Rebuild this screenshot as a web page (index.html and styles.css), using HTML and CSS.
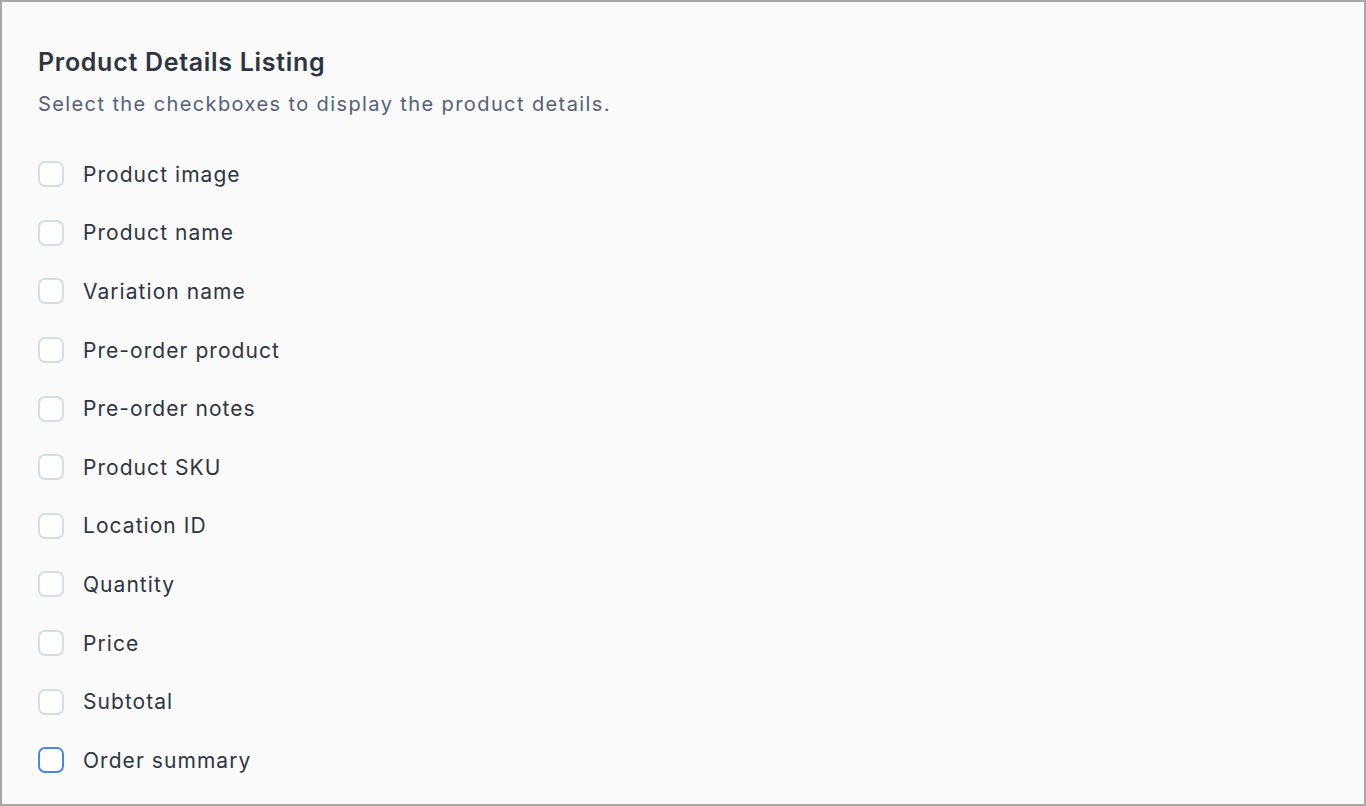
FILE: index.html
```html
<!DOCTYPE html>
<html>
<head>
  <title>Product Details Listing</title>
  <link rel="stylesheet" href="styles.css">
</head>
<body>
  <div class="panel">
    <h2 class="panel-title">Product Details Listing</h2>
    <p class="panel-desc">Select the checkboxes to display the product details.</p>

    <ul class="option-list">
      <li><label class="option"><span class="box"></span>Product image</label></li>
      <li><label class="option"><span class="box"></span>Product name</label></li>
      <li><label class="option"><span class="box"></span>Variation name</label></li>
      <li><label class="option"><span class="box"></span>Pre-order product</label></li>
      <li><label class="option"><span class="box"></span>Pre-order notes</label></li>
      <li><label class="option"><span class="box"></span>Product SKU</label></li>
      <li><label class="option"><span class="box"></span>Location ID</label></li>
      <li><label class="option"><span class="box"></span>Quantity</label></li>
      <li><label class="option"><span class="box"></span>Price</label></li>
      <li><label class="option"><span class="box"></span>Subtotal</label></li>
      <!-- focused item -->
      <li><label class="option"><span class="box focus"></span>Order summary</label></li>
    </ul>
  </div>
</body>
</html>
```

FILE: styles.css
```css
html, body {
  margin: 0;
  padding: 0;
  height: 100%;
}

body {
  font-family: Inter, "Noto Sans", sans-serif;
  background: #fafafa;
}

.panel {
  box-sizing: border-box;
  height: 806px;
  border: 2px solid #a8a8a8;
  background: #fafafa;
  padding: 44px 36px 0 36px;
}

.panel-title {
  margin: 0;
  font-size: 25px;
  font-weight: 600;
  line-height: 32px;
  letter-spacing: 0.7px;
  color: #2e3542;
}

.panel-desc {
  margin: 12px 0 0 0;
  font-size: 20px;
  line-height: 28px;
  letter-spacing: 1.4px;
  color: #52607b;
}

.option-list {
  list-style: none;
  margin: 27px 0 0 0;
  padding: 0;
}

.option-list li {
  height: 58.6px;
  display: flex;
  align-items: center;
}

.option {
  display: flex;
  align-items: center;
  font-size: 21px;
  letter-spacing: 1.05px;
  color: #2e3542;
}

.box {
  box-sizing: border-box;
  width: 26px;
  height: 26px;
  margin-right: 19px;
  border: 2px solid #d5dde6;
  border-radius: 7px;
  background: #ffffff;
}

.box.focus {
  border-color: #4a86e5;
}
```
